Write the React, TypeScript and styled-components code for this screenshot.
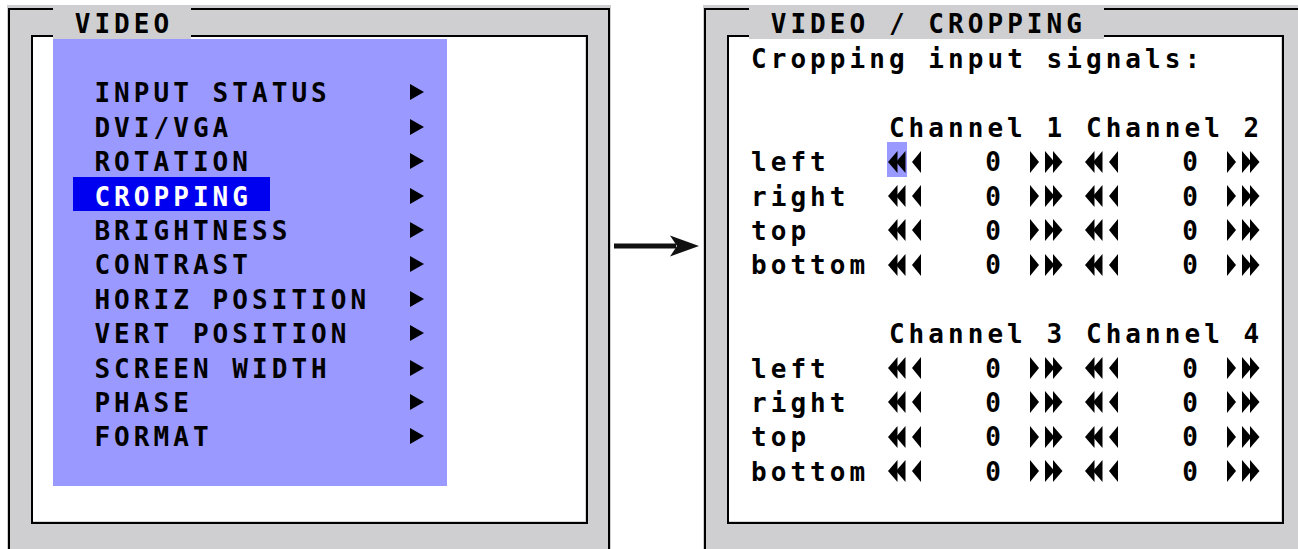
import React from 'react'
import styled, { createGlobalStyle } from 'styled-components'

const CELL = 19.7
const ROW = 34.4
const GRAY = '#cfcfd1'
// centre the monospace glyph in its cell (half of the letter-spacing)
const NUDGE = 2

const GlobalStyle = createGlobalStyle`
  html, body {
    margin: 0;
    padding: 0;
    background: #fff;
    overflow: hidden;
  }
`

const Screen = styled.div`
  display: flex;
  align-items: flex-start;
  width: 1400px;
  padding: 5px 0 0 7px;
  font-family: 'DejaVu Sans Mono', 'Liberation Mono', monospace;
  font-size: 26px;
  font-weight: bold;
  letter-spacing: 4.05px;
  line-height: 28.4px;
  color: #000;
`

const Panel = styled.div`
  flex: none;
  width: 604px;
  height: 560px;
  box-sizing: border-box;
  padding: 3px 1px 0;
  background: ${GRAY};
`

const OuterFrame = styled.div`
  position: relative;
  height: 100%;
  box-sizing: border-box;
  border: 2px solid #000;
  border-bottom: none;
  padding: 25px 20px 0 21px;
`

const Tab = styled.div<{ $cells: number }>`
  position: absolute;
  left: 43px;
  top: -5px;
  width: ${p => p.$cells * CELL}px;
  height: 34px;
  background: ${GRAY};
`

const TabTitle = styled.span`
  display: block;
  padding: 5px 0 0 ${CELL + NUDGE}px;
  white-space: pre;
`

const InnerFrame = styled.div`
  height: 489px;
  box-sizing: border-box;
  border: 2px solid #000;
  background: #fff;
  box-shadow: inset -1px -1px 0 #d6d6d8;
  padding: 2px 0 0 20px;
`

const MenuBox = styled.div`
  width: ${20 * CELL}px;
  height: 447px;
  background: #9999ff;
`

const Line = styled.div`
  display: flex;
  height: ${ROW}px;
`

const MenuLine = styled(Line)`
  padding: 0 ${CELL}px;
`

const Cell = styled.span<{ $span?: number; $right?: boolean }>`
  flex: none;
  display: block;
  width: ${p => (p.$span ? `${p.$span * CELL}px` : 'auto')};
  box-sizing: border-box;
  padding: 6px 0 0 ${p => (p.$right ? 0 : NUDGE)}px;
  white-space: pre;
  text-align: ${p => (p.$right ? 'right' : 'left')};
`

const MenuLabel = styled.span<{ $selected?: boolean }>`
  display: block;
  padding: 6px ${CELL - NUDGE}px 0 ${CELL + NUDGE}px;
  white-space: pre;
  background: ${p => (p.$selected ? '#0000f0' : 'transparent')};
  color: ${p => (p.$selected ? '#fff' : '#000')};
`

const MenuArrow = styled.span`
  flex: none;
  display: block;
  width: ${CELL}px;
  margin-left: auto;
  padding: 11px 0 0 2.4px;
  box-sizing: border-box;

  svg {
    display: block;
  }
`

const IconCell = styled.span<{ $active?: boolean }>`
  flex: none;
  display: block;
  width: ${CELL}px;
  padding-top: 8.5px;
  box-sizing: border-box;
  background: ${p => (p.$active ? '#9999ff' : 'transparent')};

  svg {
    display: block;
  }
`

const ArrowColumn = styled.div`
  flex: none;
  width: 92px;
  padding-top: 228.5px;

  svg {
    display: block;
    margin-left: 1px;
  }
`

type Dir = 'dl' | 'l' | 'r' | 'dr'

const SHAPES: Record<Dir, string[]> = {
  dl: ['1,11 10.5,0 10.5,22', '9,11 18.5,0 18.5,22'],
  l: ['5,11 14,0 14,22'],
  r: ['5,0 14,11 5,22'],
  dr: ['1,0 10.5,11 1,22', '9,0 18.5,11 9,22'],
}

const Step = ({ dir, active }: { dir: Dir; active?: boolean }) => (
  <IconCell $active={active}>
    <svg width="20" height="22" viewBox="0 0 20 22">
      {SHAPES[dir].map(pts => (
        <polygon key={pts} points={pts} fill="#000" />
      ))}
    </svg>
  </IconCell>
)

const Control = ({ value, active }: { value: number; active?: boolean }) => (
  <>
    <Step dir="dl" active={active} />
    <Step dir="l" />
    <Cell $span={4} $right>{value}</Cell>
    <Cell $span={1} />
    <Step dir="r" />
    <Step dir="dr" />
  </>
)

const MENU = [
  'INPUT STATUS',
  'DVI/VGA',
  'ROTATION',
  'CROPPING',
  'BRIGHTNESS',
  'CONTRAST',
  'HORIZ POSITION',
  'VERT POSITION',
  'SCREEN WIDTH',
  'PHASE',
  'FORMAT',
]

const SIDES = ['left', 'right', 'top', 'bottom']

const ChannelGroup = ({ a, b, focusFirst }: { a: number; b: number; focusFirst?: boolean }) => (
  <>
    <Line>
      <Cell $span={7} />
      <Cell>{`Channel ${a} Channel ${b}`}</Cell>
    </Line>
    {SIDES.map((side, i) => (
      <Line key={side}>
        <Cell $span={7}>{side}</Cell>
        <Control value={0} active={focusFirst && i === 0} />
        <Cell $span={1} />
        <Control value={0} />
      </Line>
    ))}
  </>
)

export default function App() {
  return (
    <>
      <GlobalStyle />
      <Screen>
        <Panel>
          <OuterFrame>
            <InnerFrame>
              <MenuBox>
                <Line />
                {MENU.map(item => (
                  <MenuLine key={item}>
                    <MenuLabel $selected={item === 'CROPPING'}>{item}</MenuLabel>
                    <MenuArrow>
                      <svg width="14" height="16" viewBox="0 0 14 16">
                        <polygon points="0,0 14,8 0,16" fill="#000" />
                      </svg>
                    </MenuArrow>
                  </MenuLine>
                ))}
              </MenuBox>
            </InnerFrame>
            <Tab $cells={7}>
              <TabTitle>VIDEO</TabTitle>
            </Tab>
          </OuterFrame>
        </Panel>

        <ArrowColumn>
          <svg width="88" height="24" viewBox="0 0 88 24">
            <rect x="2" y="9.5" width="62" height="5" fill="#111" />
            <polygon points="58,1.5 87,12 58,22.5 65,12" fill="#111" />
          </svg>
        </ArrowColumn>

        <Panel>
          <OuterFrame>
            <InnerFrame>
              <Line>
                <Cell>Cropping input signals:</Cell>
              </Line>
              <Line />
              <ChannelGroup a={1} b={2} focusFirst />
              <Line />
              <ChannelGroup a={3} b={4} />
            </InnerFrame>
            <Tab $cells={18}>
              <TabTitle>VIDEO / CROPPING</TabTitle>
            </Tab>
          </OuterFrame>
        </Panel>
      </Screen>
    </>
  )
}
